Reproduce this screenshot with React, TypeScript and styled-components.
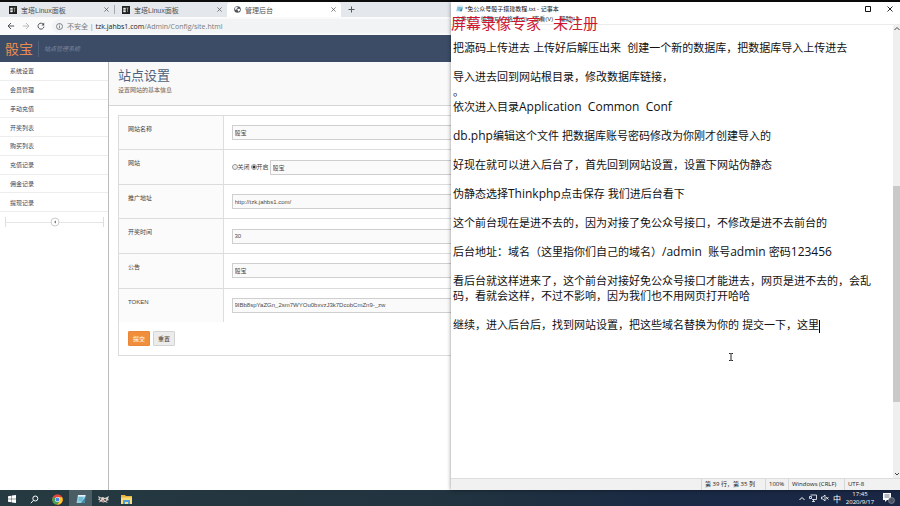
import React from "react";
import styled, { createGlobalStyle, css } from "styled-components";

const cjk = '"Noto Sans CJK SC"';

const GlobalStyle = createGlobalStyle`
  * { box-sizing: border-box; }
  html, body, #root { height: 100%; margin: 0; }
  body { background: #0c0c0c; overflow: hidden; font-family: "Liberation Sans", ${cjk}, sans-serif; }
  button, input { font: inherit; }
  button { cursor: pointer; }
`;

const Screen = styled.div`
  display: flex;
  flex-direction: column;
  height: 100vh;
  padding-top: 2px;
`;

const Desktop = styled.div`
  flex: 1;
  min-height: 0;
  display: grid;
  grid-template-columns: 451fr 449fr;
`;

/* ---------- Browser ---------- */

const Browser = styled.section`
  min-width: 0;
  display: flex;
  flex-direction: column;
  background: #fff;
  overflow: hidden;
`;

const TabStrip = styled.div`
  display: flex;
  height: 15px;
  flex: none;
  background: #e4e7eb;
`;

const Tab = styled.div<{ $active?: boolean }>`
  display: flex;
  align-items: center;
  gap: 4px;
  width: ${(p) => (p.$active ? 114 : 112)}px;
  padding: 0 5px 0 7px;
  border-radius: 4px 4px 0 0;
  background: ${(p) => (p.$active ? "#fff" : "transparent")};
  color: #4f5357;
  font-size: 7px;
  &:first-child { width: 114px; padding-left: 9px; }
`;

const TabTitle = styled.span`
  flex: 1;
  white-space: nowrap;
`;

const IconButton = styled.button`
  display: inline-flex;
  align-items: center;
  justify-content: center;
  padding: 0;
  border: 0;
  background: none;
  color: #55595d;
`;

const NewTab = styled(IconButton)`
  width: 20px;
`;

const Separator = styled.span`
  width: 1px;
  height: 9px;
  align-self: center;
  background: #a5a9ae;
`;

const Toolbar = styled.div`
  display: flex;
  align-items: center;
  gap: 7px;
  height: 18px;
  flex: none;
  padding-left: 7px;
  background: #fafafb;
`;

const AddressBar = styled.div`
  flex: 1;
  display: flex;
  align-items: center;
  gap: 4px;
  height: 14px;
  padding-left: 4px;
  border-radius: 7px 0 0 7px;
  background: #f1f3f4;
  color: #5f6368;
  font-size: 7px;
`;

const Address = styled.div`
  font-family: "Open Sans", ${cjk}, sans-serif;
  color: #787c80;
  white-space: nowrap;
  b { font-weight: 400; color: #202124; }
`;

const SiteHeader = styled.header`
  display: flex;
  align-items: center;
  gap: 5px;
  height: 27px;
  flex: none;
  padding-left: 5px;
  background: #3c4c67;
`;

const Brand = styled.a`
  color: #e98a50;
  font-size: 14px;
  line-height: 20px;
  text-decoration: none;
`;

const Tagline = styled.span`
  padding-left: 5px;
  border-left: 1px solid #50607a;
  color: #7c899f;
  font-size: 6px;
  line-height: 16px;
  font-style: italic;
`;

const SiteBody = styled.div`
  flex: 1;
  min-height: 0;
  display: flex;
`;

const Sidebar = styled.aside`
  width: 109px;
  flex: none;
  border-right: 1px solid #bcbcbe;
`;

const Menu = styled.nav`
  display: grid;
  grid-auto-rows: 1fr;
  height: 150px;
`;

const MenuLink = styled.a`
  display: flex;
  align-items: center;
  padding-left: 10px;
  border-bottom: 1px solid #ededee;
  color: #35465c;
  font-size: 6px;
  text-decoration: none;
`;

const Collapse = styled.button`
  display: flex;
  align-items: center;
  justify-content: center;
  width: 99px;
  height: 10px;
  margin: 5px;
  padding: 0;
  border: solid #dededf;
  border-width: 0 1px;
  background: linear-gradient(#e6e6e6, #e6e6e6) center / 100% 1px no-repeat;
`;

const Main = styled.main`
  flex: 1;
  min-width: 0;
`;

const PageHead = styled.div`
  height: 44px;
  padding: 4px 0 0 9px;
  border-bottom: 1px solid #d5d5d6;
  background: #f9f9fa;
`;

const PageTitle = styled.h1`
  margin: 0;
  color: #4e627c;
  font-size: 13px;
  line-height: 20px;
  font-weight: 400;
`;

const PageNote = styled.p`
  margin: 0;
  color: #6b5e58;
  font-size: 6px;
  line-height: 9px;
`;

const Form = styled.form`
  margin: 9px 0 0 9px;
  border: solid #dcdcdd;
  border-width: 1px 0 1px 1px;
`;

const Fields = styled.table`
  width: 100%;
  height: 206px;
  border-collapse: collapse;
  table-layout: fixed;
  tr { border-bottom: 1px solid #dcdcdd; }
  tr:last-child { border-bottom: 0; }
`;

const LabelCell = styled.th`
  width: 104px;
  padding: 9px 0 0 9px;
  border-right: 1px solid #dedede;
  background: #fbfbfb;
  color: #444;
  font-size: 6px;
  line-height: 9px;
  font-weight: 400;
  text-align: left;
  vertical-align: top;
`;

const ValueCell = styled.td`
  padding: 0 0 0 8px;
`;

const ValueRow = styled.div`
  display: flex;
  align-items: center;
  gap: 1px;
`;

const TextInput = styled.input`
  flex: 1;
  min-width: 0;
  height: 15px;
  padding: 0 2px;
  border: 1px solid #cfcfd0;
  border-right: 0;
  background: #fafafa;
  color: #4c4c4c;
  font-size: 6px;
  outline: 0;
`;

const Choice = styled.label`
  display: flex;
  align-items: center;
  color: #444;
  font-size: 6px;
  line-height: 10px;
  input {
    appearance: none;
    width: 6px;
    height: 6px;
    margin: 0;
    border: 1px solid #999;
    border-radius: 50%;
    background: #eee;
  }
  input:checked { background: radial-gradient(#333 50%, #fff 60%); }
`;

const Actions = styled.div`
  display: flex;
  gap: 3px;
  padding: 9px;
`;

const ActionButton = styled.button<{ $primary?: boolean }>`
  width: 22px;
  height: 15px;
  padding: 0;
  border: 1px solid #d2d2d2;
  border-radius: 1px;
  background: #ececec;
  color: #333;
  font-size: 6px;
  ${(p) => p.$primary && css`
    border-color: #e8863a;
    background: #f18e3b;
    color: #fff;
  `}
`;

/* ---------- Notepad ---------- */

const Notepad = styled.section`
  position: relative;
  min-width: 0;
  display: flex;
  flex-direction: column;
  background: #fff;
  box-shadow: 0 0 4px rgba(0, 0, 0, 0.45);
`;

const TitleBar = styled.div`
  display: flex;
  align-items: center;
  gap: 2px;
  height: 13px;
  padding: 0 7px 0 5px;
  font-size: 6px;
  color: #111;
`;

const TitleText = styled.span`
  flex: 1;
`;

const WindowButtons = styled.div`
  display: flex;
  gap: 16px;
  button { color: #111; }
`;

const MenuBar = styled.nav`
  display: flex;
  align-items: center;
  gap: 6px;
  height: 10px;
  padding-left: 4px;
  border-bottom: 1px solid #ececec;
  button {
    padding: 0;
    border: 0;
    background: none;
    color: #333;
    font-size: 6px;
    line-height: 9px;
  }
`;

const Watermark = styled.div`
  position: absolute;
  top: 13px;
  left: 0;
  display: flex;
  gap: 12px;
  color: #cf1630;
  font: 400 15px/18px "Liberation Serif", ${cjk}, serif;
  white-space: nowrap;
  pointer-events: none;
`;

const EditorRow = styled.div`
  flex: 1;
  min-height: 0;
  display: flex;
`;

const Editor = styled.div`
  flex: 1;
  min-width: 0;
  display: flex;
  flex-direction: column;
  gap: 14px;
  padding: 15px 14px 0 2px;
  outline: 0;
  color: #111;
  font-family: "Open Sans", ${cjk}, sans-serif;
  font-size: 11px;
  line-height: 15px;
`;

const Paragraph = styled.p`
  margin: 0;
  white-space: pre-wrap;
`;

const Latin = styled.span`
  font-size: 12px;
`;

const Caret = styled.span`
  display: inline-block;
  width: 1px;
  height: 13px;
  vertical-align: middle;
  background: #000;
`;

const Pointer = styled.svg`
  position: absolute;
  left: 277px;
  top: 350px;
`;

const Scrollbar = styled.div`
  display: flex;
  flex-direction: column;
  align-items: center;
  width: 7px;
  background: #efefef;
  color: #444;
`;

const Track = styled.div`
  flex: 1;
  width: 100%;
  display: grid;
  grid-template-rows: 154fr 216fr 69fr;
`;

const Thumb = styled.div`
  grid-row: 2;
  background: #c9c9c9;
`;

const StatusBar = styled.footer`
  display: flex;
  justify-content: flex-end;
  height: 12px;
  flex: none;
  border-top: 1px solid #dcdcdc;
  background: #f1f1f1;
  color: #222;
  font-family: "Open Sans", ${cjk}, sans-serif;
  font-size: 6px;
  line-height: 11px;
`;

const Status = styled.span<{ $width: number }>`
  width: ${(p) => p.$width}px;
  padding-left: 3px;
  border-left: 1px solid #d6d6d6;
  white-space: nowrap;
`;

/* ---------- Taskbar ---------- */

const Taskbar = styled.footer`
  display: flex;
  align-items: stretch;
  justify-content: space-between;
  height: 16px;
  flex: none;
  background: linear-gradient(90deg, #263a41, #21333f 50%, #1a2944 75%, #192745);
`;

const Group = styled.div`
  display: flex;
`;

const TaskButton = styled.button<{ $active?: boolean }>`
  display: flex;
  align-items: center;
  justify-content: center;
  width: 23px;
  padding: 2px 0 0;
  border: 0;
  background: ${(p) => (p.$active ? "#4b5d64" : "transparent")};
`;

const Tray = styled.div`
  display: flex;
  align-items: center;
  gap: 4px;
  padding-right: 5px;
  color: #fff;
  font-size: 8px;
`;

const Clock = styled.time`
  width: 30px;
  margin-right: 4px;
  font-family: "Open Sans", sans-serif;
  font-size: 6px;
  line-height: 8px;
  text-align: center;
  white-space: nowrap;
`;

/* ---------- Drawings ---------- */

const Cross = ({ size = 5 }: { size?: number }) => (
  <svg width={size} height={size} viewBox="0 0 6 6" stroke="currentColor" strokeWidth="0.9">
    <path d="M.5.5l5 5M5.5.5l-5 5" />
  </svg>
);

const PanelLogo = () => (
  <svg width="8" height="8" viewBox="0 0 8 8">
    <path d="M0 0h8v8H0z" fill="#222" />
    <path d="M1.5 2h2v1.5h-2zM1.5 4.5h2V6h-2zM4.5 2h2M5.5 2v4" fill="#eee" stroke="#ddd" strokeWidth=".5" />
  </svg>
);

const Globe = () => (
  <svg width="7" height="7" viewBox="0 0 16 16">
    <circle cx="8" cy="8" r="7.5" fill="#50545a" />
    <path d="M3 3l4-1 2 2-3 2-1 3-3-1zM10 6l4 1-1 4-3 2-1-3-2-2z" fill="#fff" />
  </svg>
);

const BackArrow = ({ faded }: { faded?: boolean }) => (
  <svg width="8" height="8" viewBox="0 0 8 8" fill="none" stroke={faded ? "#b7babd" : "#505458"}>
    <path d={faded ? "M.8 4h6M4 1l3 3-3 3" : "M7.2 4h-6M4 1L1 4l3 3"} />
  </svg>
);

const Reload = () => (
  <svg width="8" height="8" viewBox="0 0 8 8" fill="none" stroke="#505458">
    <path d="M6.6 2.6A3 3 0 1 0 7 4.6" />
    <path d="M7.2.6v2.8H4.4z" fill="#505458" stroke="none" />
  </svg>
);

const Info = () => (
  <svg width="7" height="7" viewBox="0 0 14 14" fill="none" stroke="#5f6368" strokeWidth="1.5">
    <circle cx="7" cy="7" r="6" />
    <path d="M7 6v4.5M7 3.2v1.6" />
  </svg>
);

const Chevron = ({ up }: { up?: boolean }) => (
  <svg width="6" height="7" viewBox="0 0 6 7" fill="none" stroke="currentColor">
    <path d={up ? "M.5 5L3 2.500 5.500 5" : "M1 2l2 2 2-2"} />
  </svg>
);

const NoteIcon = ({ size = 7 }: { size?: number }) => (
  <svg width={size} height={size} viewBox="0 0 10 10">
    <path d="M2 1h7.5L8.500 9H.5z" fill="#8fd0e3" />
    <path d="M2 1h7.500l-.2 1.500H1.800z" fill="#e9f5f8" />
    <path d="M3 4h4M2.700 6h4" stroke="#4593ad" strokeWidth=".7" />
    <path d="M9.500 3L8.500 9H5z" fill="#3d8aa6" />
  </svg>
);

const WindowsLogo = () => (
  <svg width="8" height="8" viewBox="0 0 8 8" fill="#fff">
    <path d="M0 1.200l3.500-.5v3.100H0zM3.900.6L8 0v3.800H3.900zM0 4.200h3.500v3.100L0 6.800zM3.900 4.200H8V8l-4.100-.6z" />
  </svg>
);

const SearchIcon = () => (
  <svg width="9" height="9" viewBox="0 0 9 9" fill="none" stroke="#fff">
    <circle cx="5.300" cy="3.500" r="2.500" />
    <path d="M3.500 5.300L.8 8.200" />
  </svg>
);

const ChromeIcon = () => (
  <svg width="11" height="11" viewBox="0 0 22 22">
    <circle cx="11" cy="11" r="10.500" fill="#e8453c" />
    <path d="M1.900 5.800A10.500 10.500 0 0 0 11 21.500l4.300-8z" fill="#3fa757" />
    <path d="M20.400 6.300A10.500 10.500 0 0 1 11 21.500l4.800-9L11 6.300z" fill="#fbc927" />
    <circle cx="11" cy="11" r="5" fill="#fff" />
    <circle cx="11" cy="11" r="4" fill="#4a85ee" />
  </svg>
);

const RecorderIcon = () => (
  <svg width="11" height="9" viewBox="0 0 11 9">
    <path d="M0 1l3 1.500L5 2l2 1 4-2-1 3 1 1-3 1 2 2-3-1-2 .5-2-1-2 1 1-2-2-1 1-1z" fill="#d8d0cd" />
    <path d="M1.500 3l2 1-1 1zM6 4l2.500.5L7 6z" fill="#191b1d" />
    <path d="M4 5.500h2v1H4z" fill="#b5443f" />
  </svg>
);

const FolderIcon = () => (
  <svg width="11" height="9" viewBox="0 0 11 9">
    <path d="M0 0h4l1 1h6v8H0z" fill="#e9b73f" />
    <path d="M0 2.500h11V9H0z" fill="#fbdc78" />
    <path d="M2 5h7v4H7V7H4v2H2z" fill="#4b9fdb" />
  </svg>
);

const MonitorIcon = () => (
  <svg width="8" height="8" viewBox="0 0 8 8" fill="none" stroke="#fff" strokeWidth=".8">
    <path d="M1.500 1h6v4.500H3M4.500 5.500v2M3 7.500h3M.5 2.500h2v2h-2z" />
  </svg>
);

const SpeakerIcon = () => (
  <svg width="8" height="8" viewBox="0 0 8 8" fill="none" stroke="#fff" strokeWidth=".8">
    <path d="M.5 3h1.300L4 1v6L1.800 5H.5zM5 3l2.500 2.500M7.500 3L5 5.500" />
  </svg>
);

const NoticeIcon = () => (
  <svg width="12" height="11" viewBox="0 0 12 11">
    <path d="M0 0h8v7H4L2 9V7H0z" fill="#fff" />
    <path d="M1.500 2h5M1.500 4h5" stroke="#2a3a55" strokeWidth=".7" />
    <circle cx="8.500" cy="7.500" r="3" fill="#4b5264" stroke="#9ba3b0" strokeWidth=".6" />
  </svg>
);

/* ---------- Content ---------- */

const menuItems = ["系统设置", "会员管理", "手动充值", "开奖列表", "购买列表", "充值记录", "佣金记录", "提现记录"];

const fields = [
  { id: "name", label: "网站名称", value: "骰宝" },
  { id: "site", label: "网站", value: "骰宝", toggle: true },
  { id: "url", label: "推广地址", value: "http://tzk.jahbs1.com/" },
  { id: "time", label: "开奖时间", value: "30" },
  { id: "notice", label: "公告", value: "骰宝" },
  { id: "token", label: "TOKEN", value: "9IBb8spYaZGn_2sm7WYOu0bxvzJ3k7DcobCmZn9-_zw" },
];

const notes = [
  "把源码上传进去 上传好后解压出来  创建一个新的数据库，把数据库导入上传进去",
  "导入进去回到网站根目录，修改数据库链接，\n。\n依次进入目录Application  Common  Conf",
  "db.php编辑这个文件 把数据库账号密码修改为你刚才创建导入的",
  "好现在就可以进入后台了，首先回到网站设置，设置下网站伪静态",
  "伪静态选择Thinkphp点击保存 我们进后台看下",
  "这个前台现在是进不去的，因为对接了免公众号接口，不修改是进不去前台的",
  "后台地址：域名（这里指你们自己的域名）/admin  账号admin 密码123456",
  "看后台就这样进来了，这个前台对接好免公众号接口才能进去，网页是进不去的，会乱码，看就会这样，不过不影响，因为我们也不用网页打开哈哈",
  "继续，进入后台后，找到网站设置，把这些域名替换为你的 提交一下，这里",
];

const withLatin = (text: string) =>
  text.split(/([\x20-\x7e]+)/).map((part, i) => (i % 2 ? <Latin key={i}>{part}</Latin> : part));

const BrowserTab = ({ title, active }: { title: string; active?: boolean }) => (
  <Tab $active={active}>
    {active ? <Globe /> : <PanelLogo />}
    <TabTitle>{title}</TabTitle>
    <IconButton aria-label="关闭标签页"><Cross /></IconButton>
  </Tab>
);

const BrowserWindow = () => (
  <Browser>
    <TabStrip>
      <BrowserTab title="宝塔Linux面板" />
      <Separator />
      <BrowserTab title="宝塔Linux面板" />
      <BrowserTab title="管理后台" active />
      <NewTab aria-label="新标签页">
        <svg width="7" height="7" viewBox="0 0 7 7" stroke="currentColor"><path d="M3.500.5v6M.5 3.500h6" /></svg>
      </NewTab>
    </TabStrip>
    <Toolbar>
      <IconButton aria-label="后退"><BackArrow /></IconButton>
      <IconButton aria-label="前进"><BackArrow faded /></IconButton>
      <IconButton aria-label="刷新"><Reload /></IconButton>
      <AddressBar>
        <Info />
        <Address>不安全 | <b>tzk.jahbs1.com</b>/Admin/Config/site.html</Address>
      </AddressBar>
    </Toolbar>
    <SiteHeader>
      <Brand href="#home">骰宝</Brand>
      <Tagline>站点管理系统</Tagline>
    </SiteHeader>
    <SiteBody>
      <Sidebar>
        <Menu>{menuItems.map((m) => <MenuLink key={m} href={`#${m}`}>{m}</MenuLink>)}</Menu>
        <Collapse type="button" aria-label="收起菜单">
          <svg width="10" height="10" viewBox="0 0 10 10">
            <circle cx="5" cy="5" r="4" fill="#fff" stroke="#ccc" />
            <path d="M6 3.500v3L4 5z" fill="#777" />
          </svg>
        </Collapse>
      </Sidebar>
      <Main>
        <PageHead>
          <PageTitle>站点设置</PageTitle>
          <PageNote>设置网站的基本信息</PageNote>
        </PageHead>
        <Form onSubmit={(e) => e.preventDefault()}>
          <Fields>
            <tbody>
              {fields.map((f) => (
                <tr key={f.id}>
                  <LabelCell scope="row"><label htmlFor={f.id}>{f.label}</label></LabelCell>
                  <ValueCell>
                    <ValueRow>
                      {f.toggle && (
                        <>
                          <Choice><input type="radio" name="open" />关闭</Choice>
                          <Choice><input type="radio" name="open" defaultChecked />开启</Choice>
                        </>
                      )}
                      <TextInput id={f.id} defaultValue={f.value} />
                    </ValueRow>
                  </ValueCell>
                </tr>
              ))}
            </tbody>
          </Fields>
          <Actions>
            <ActionButton $primary type="submit">提交</ActionButton>
            <ActionButton type="reset">重置</ActionButton>
          </Actions>
        </Form>
      </Main>
    </SiteBody>
  </Browser>
);

const NotepadWindow = () => (
  <Notepad>
    <TitleBar>
      <NoteIcon />
      <TitleText>*免公众号骰子搭建教程.txt - 记事本</TitleText>
      <WindowButtons>
        <IconButton aria-label="最大化">
          <svg width="6" height="6" viewBox="0 0 6 6" fill="none" stroke="currentColor"><path d="M.5.5h5v5h-5z" /></svg>
        </IconButton>
        <IconButton aria-label="关闭"><Cross size={6} /></IconButton>
      </WindowButtons>
    </TitleBar>
    <MenuBar>
      {["文件(F)", "编辑(E)", "格式(O)", "查看(V)", "帮助(H)"].map((m) => <button key={m}>{m}</button>)}
    </MenuBar>
    <EditorRow>
      <Editor contentEditable suppressContentEditableWarning role="textbox" aria-multiline="true" aria-label="文本编辑器" spellCheck={false}>
        {notes.map((n, i) => (
          <Paragraph key={i}>
            {withLatin(n)}
            {i === notes.length - 1 && <Caret />}
          </Paragraph>
        ))}
      </Editor>
      <Scrollbar>
        <Chevron up />
        <Track><Thumb /></Track>
        <Chevron />
      </Scrollbar>
    </EditorRow>
    <StatusBar>
      <Status $width={64}>第 39 行，第 35 列</Status>
      <Status $width={23}>100%</Status>
      <Status $width={56}>Windows (CRLF)</Status>
      <Status $width={56}>UTF-8</Status>
    </StatusBar>
    <Watermark><span>屏幕录像专家</span><span>未注册</span></Watermark>
    <Pointer width="6" height="10" viewBox="0 0 6 10" fill="none" stroke="#222">
      <path d="M1 1.500h1.500L3 2l.5-.5H5M3 2v6M1 8.500h1.500L3 8l.5.5H5" />
    </Pointer>
  </Notepad>
);

export default function App() {
  return (
    <Screen>
      <GlobalStyle />
      <Desktop>
        <BrowserWindow />
        <NotepadWindow />
      </Desktop>
      <Taskbar>
        <Group>
          <TaskButton aria-label="开始"><WindowsLogo /></TaskButton>
          <TaskButton aria-label="搜索"><SearchIcon /></TaskButton>
          <TaskButton aria-label="Chrome"><ChromeIcon /></TaskButton>
          <TaskButton aria-label="记事本" $active><NoteIcon size={10} /></TaskButton>
          <TaskButton aria-label="录像"><RecorderIcon /></TaskButton>
          <TaskButton aria-label="文件"><FolderIcon /></TaskButton>
        </Group>
        <Tray>
          <Chevron up />
          <MonitorIcon />
          <SpeakerIcon />
          <span>中</span>
          <Clock>17:45<br />2020/9/17</Clock>
          <NoticeIcon />
        </Tray>
      </Taskbar>
    </Screen>
  );
}
